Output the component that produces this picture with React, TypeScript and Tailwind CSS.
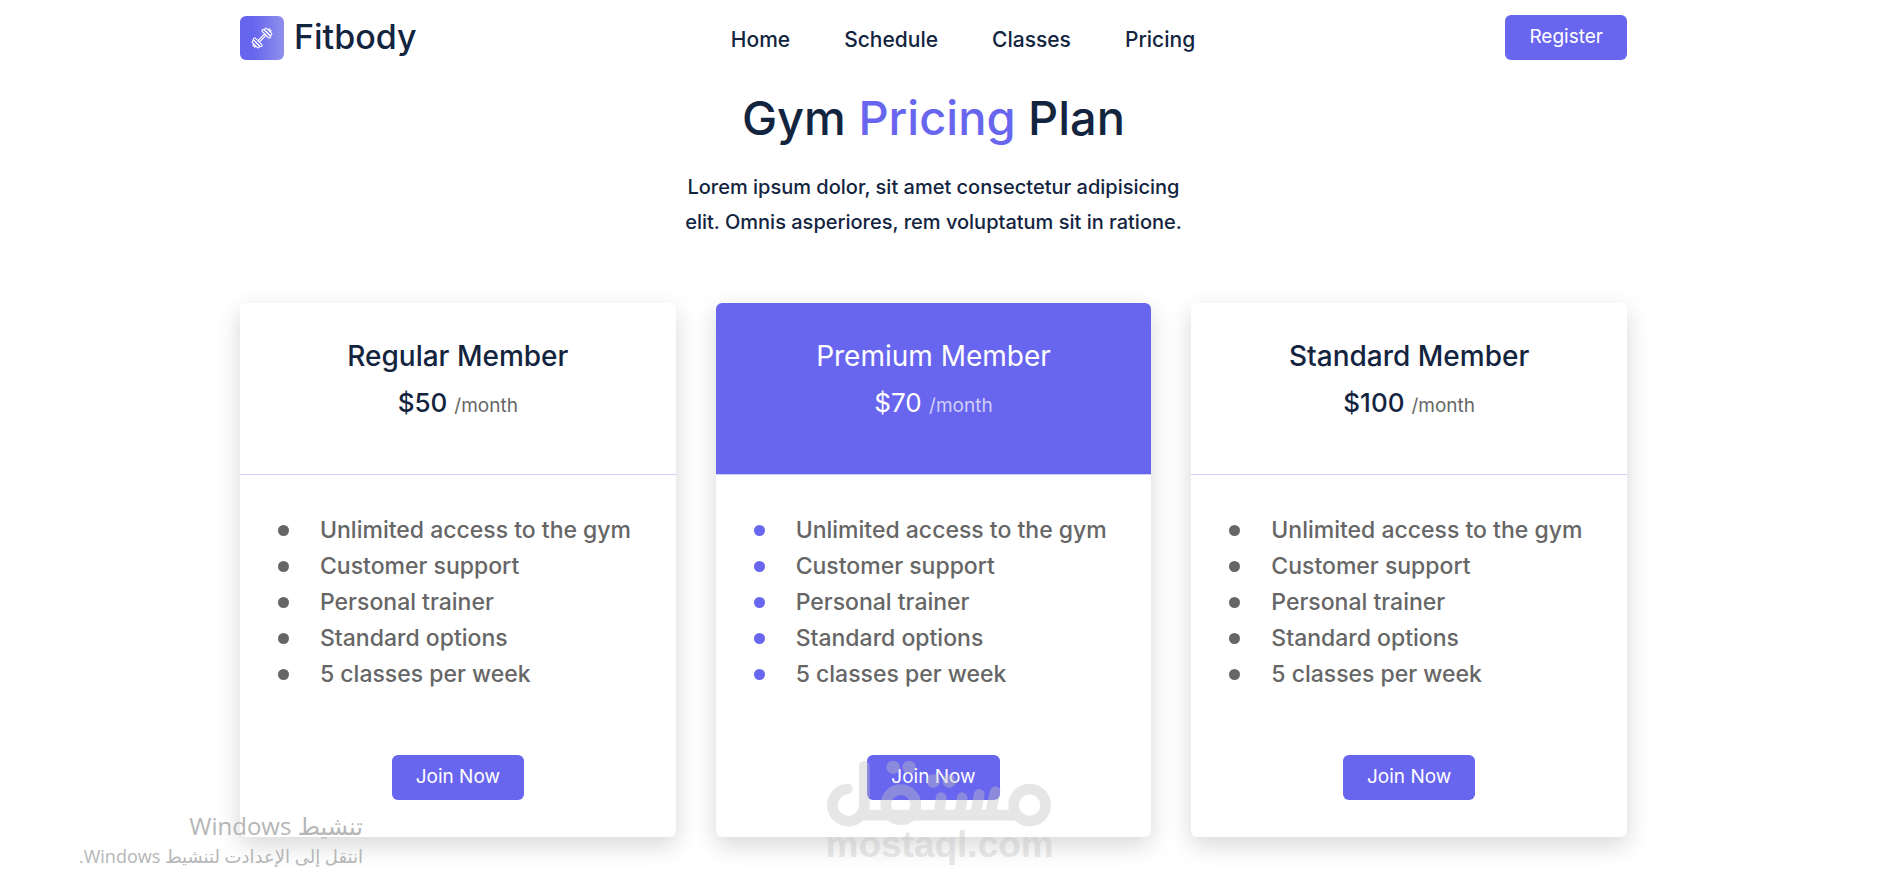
import React from 'react';

interface Plan {
  name: string;
  price: string;
  featured?: boolean;
}

const navLinks = ['Home', 'Schedule', 'Classes', 'Pricing'];

const plans: Plan[] = [
  { name: 'Regular Member', price: '$50' },
  { name: 'Premium Member', price: '$70', featured: true },
  { name: 'Standard Member', price: '$100' },
];

const features = [
  'Unlimited access to the gym',
  'Customer support',
  'Personal trainer',
  'Standard options',
  '5 classes per week',
];

const DumbbellIcon: React.FC = () => (
  <svg viewBox="0 0 24 24" className="h-6 w-6" fill="none" stroke="white" strokeWidth="1.1" strokeLinejoin="round" aria-hidden="true">
    <g transform="rotate(-45 12 12)">
      <path d="M7 11h10M7 13h10" />
      <rect x="4.6" y="6.6" width="2.6" height="10.8" rx="0.8" />
      <rect x="2" y="7.6" width="2.6" height="8.8" rx="0.8" />
      <path d="M2 10.6H0.4v2.8H2" />
      <rect x="16.8" y="6.6" width="2.6" height="10.8" rx="0.8" />
      <rect x="19.4" y="7.6" width="2.6" height="8.8" rx="0.8" />
      <path d="M22 10.6h1.6v2.8H22" />
    </g>
  </svg>
);

const Header: React.FC = () => (
  <header className="flex h-[75px] items-center justify-between">
    <a href="#" className="flex items-center gap-[10px]">
      <span className="flex h-11 w-11 items-center justify-center rounded-md bg-linear-to-r from-[#6665ee] from-30% to-[#918fec]">
        <DumbbellIcon />
      </span>
      <span className="pb-0.5 text-[34px] leading-10 font-medium">Fitbody</span>
    </a>
    <nav className="flex gap-[54px] pt-1 pl-1">
      {navLinks.map((link) => (
        <a key={link} href="#" className="text-[21px] leading-7 font-medium">
          {link}
        </a>
      ))}
    </nav>
    <button type="button" className="h-[45px] rounded-md bg-[#6865ef] px-6 text-[19px] text-white">
      Register
    </button>
  </header>
);

const PlanCard: React.FC<{ plan: Plan }> = ({ plan }) => (
  <article className="rounded-md bg-white text-center shadow-[0_8px_24px_rgba(0,0,0,0.16)]">
    <div
      className={
        plan.featured
          ? 'rounded-t-md border-b border-[#cfcdf9] bg-[#6865ef] pt-8 pb-[50px] text-white'
          : 'border-b border-[#cfcdf9] pt-8 pb-[50px] font-medium'
      }
    >
      <h2 className="text-[28px] leading-[42px]">{plan.name}</h2>
      <p className="mt-2 text-[26px] leading-9">
        {plan.price}{' '}
        <span className={plan.featured ? 'text-[19px] text-[#d0cff7]' : 'text-[19px] font-normal text-[#666]'}>/month</span>
      </p>
    </div>
    <div className="pt-[37px] pr-4 pb-[37px] pl-[38px]">
      <ul className="text-left text-[23px] leading-9 font-medium text-[#666]">
        {features.map((feature) => (
          <li key={feature} className="flex items-center gap-[31px] whitespace-nowrap">
            <span className={plan.featured ? 'h-[11px] w-[11px] rounded-full bg-[#6865ef]' : 'h-[11px] w-[11px] rounded-full bg-[#666]'} />
            {feature}
          </li>
        ))}
      </ul>
      <button type="button" className="mt-[63px] mr-[22px] h-[45px] rounded-md bg-[#6865ef] px-6 text-[19px] text-white">
        Join Now
      </button>
    </div>
  </article>
);

const Watermark: React.FC = () => (
  <div className="pointer-events-none absolute top-[760px] left-1/2 -ml-[113px] w-[225px] text-[#c3c3c3] opacity-40">
    <svg viewBox="138 62 674 201" className="block w-full" fill="none" stroke="currentColor" strokeWidth="32" strokeLinecap="round" aria-hidden="true">
      <path d="M202 149A48 48 0 1 0 253 197V80" />
      <path d="M246 227H708" strokeLinecap="butt" />
      <circle cx="362" cy="196" r="45" />
      <circle cx="748" cy="197" r="48" />
      <path d="M483 175L478 218M546 175L540 218M597 165L587 218M645 157L631 218" />
      <g fill="currentColor" stroke="none">
        <circle cx="339" cy="84" r="20" />
        <circle cx="387" cy="84" r="20" />
        <circle cx="459" cy="125" r="20" />
        <circle cx="507" cy="125" r="20" />
      </g>
    </svg>
    <p className="text-center font-['Liberation_Sans'] text-[37px] leading-9 font-bold">mostaql.com</p>
  </div>
);

const ActivationNotice: React.FC = () => (
  <div
    dir="rtl"
    className="pointer-events-none absolute top-[808px] left-[80px] w-[283px] font-['Open_Sans','DejaVu_Sans',sans-serif] whitespace-nowrap text-[#b5b6b7]"
  >
    <p className="text-[24px] leading-9">تنشيط Windows</p>
    <p className="text-[18px] leading-6">انتقل إلى الإعدادت لتنشيط Windows.</p>
  </div>
);

export default function App() {
  return (
    <div className="relative overflow-hidden bg-white px-6 pb-11 font-['Inter',sans-serif] text-[#13243f]">
      <div className="mx-auto max-w-[1397px] pr-[10px]">
        <Header />
        <main>
          <section className="text-center">
            <h1 className="pt-[11px] text-[47px] leading-[64px] font-medium">
              Gym <span className="text-[#6865ef]">Pricing</span> Plan
            </h1>
            <p className="mx-auto mt-5 max-w-[530px] text-[20px] leading-[35px] font-medium">
              Lorem ipsum dolor, sit amet consectetur adipisicing elit. Omnis asperiores, rem voluptatum sit in ratione.
            </p>
          </section>
          <section className="mt-[63px] grid grid-cols-1 gap-10 lg:grid-cols-3">
            {plans.map((plan) => (
              <PlanCard key={plan.name} plan={plan} />
            ))}
          </section>
        </main>
      </div>
      <Watermark />
      <ActivationNotice />
    </div>
  );
}
